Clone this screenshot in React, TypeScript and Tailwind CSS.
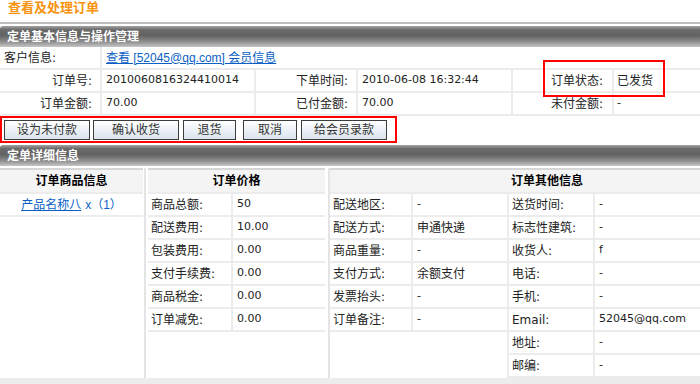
import React from 'react';

const isCjk = (s: string) => /[\u4e00-\u9fff]/.test(s);

// values: latin text in a Verdana-like face, chinese text at 12px
const Val = ({ v }: { v: string }) => (
  <span className={isCjk(v) ? 'text-[12px]' : 'text-[11px]'}>{v}</span>
);

const Bar = ({ title }: { title: string }) => (
  <div className="h-[21px] flex items-center pl-[7px] rounded-tl-[3px] bg-[linear-gradient(to_bottom,#a3a3a3_0%,#6a6a6a_18%,#626262_45%,#8e8e8e_75%,#c6c6c6_100%)] text-white font-bold text-[12px]">
    {title}
  </div>
);

const Head = ({ title }: { title: string }) => (
  <div className="h-[26px] border-t-2 border-b-2 border-t-[#d6d6d6] border-b-[#ececec] bg-[#f4f4f4] flex items-center justify-center font-bold text-[12px] text-black">
    {title}
  </div>
);

const Row = ({ label, value, lw }: { label: string; value: string; lw: string }) => (
  <div className="h-[23px] flex border-b-2 border-[#ececec]">
    <div className={`${lw} shrink-0 h-full flex items-center pl-[3px] border-r-2 border-[#ececec]`}>{label}</div>
    <div className="flex-1 h-full flex items-center pl-[4px]">
      <Val v={value} />
    </div>
  </div>
);

const App = () => {
  const prices = [
    ['商品总额:', '50'],
    ['配送费用:', '10.00'],
    ['包装费用:', '0.00'],
    ['支付手续费:', '0.00'],
    ['商品税金:', '0.00'],
    ['订单减免:', '0.00'],
  ];
  const otherLeft = [
    ['配送地区:', '-'],
    ['配送方式:', '申通快递'],
    ['商品重量:', '-'],
    ['支付方式:', '余额支付'],
    ['发票抬头:', '-'],
    ['订单备注:', '-'],
  ];
  const otherRight = [
    ['送货时间:', '-'],
    ['标志性建筑:', '-'],
    ['收货人:', 'f'],
    ['电话:', '-'],
    ['手机:', '-'],
    ['Email:', '52045@qq.com'],
    ['地址:', '-'],
    ['邮编:', '-'],
  ];

  return <div className="w-[700px] h-[384px] overflow-hidden bg-white">
      <div className="relative w-[764px] text-[12px] text-[#222] font-['DejaVu_Sans','Noto_Sans_CJK_SC',sans-serif]">
        {/* page title */}
        <div className="h-[22px] pl-[8px] leading-[16px] text-[13px] font-bold text-[#f7930f]">查看及处理订单</div>
        <div className="h-[2px] bg-[#bdbdbd]" />
        <div className="h-[2px]" />
        <Bar title="定单基本信息与操作管理" />

        {/* basic info */}
        <div className="h-[23px] flex border-b-2 border-[#ececec]">
          <div className="w-[102px] h-full flex items-center pl-[4px] border-r-2 border-[#ececec]">客户信息:</div>
          <div className="flex-1 h-full flex items-center pl-[4px]">
            <a className="text-[#0b5fc4] underline font-['Liberation_Sans','Noto_Sans_CJK_SC',sans-serif]">查看 [52045@qq.com] 会员信息</a>
          </div>
        </div>
        <div className="h-[23px] flex border-b-2 border-[#ececec]">
          <div className="w-[102px] h-full flex items-center justify-end pr-[8px] border-r-2 border-[#ececec]">订单号:</div>
          <div className="w-[154px] h-full flex items-center pl-[4px] border-r-2 border-[#ececec]"><Val v="2010060816324410014" /></div>
          <div className="w-[102px] h-full flex items-center justify-end pr-[8px] border-r-2 border-[#ececec]">下单时间:</div>
          <div className="w-[155px] h-full flex items-center pl-[4px] border-r-2 border-[#ececec]"><Val v="2010-06-08 16:32:44" /></div>
          <div className="w-[101px] h-full flex items-center justify-end pr-[9px] border-r-2 border-[#ececec]">订单状态:</div>
          <div className="flex-1 h-full flex items-center pl-[3px]"><Val v="已发货" /></div>
        </div>
        <div className="h-[23px] flex border-b-2 border-[#ececec]">
          <div className="w-[102px] h-full flex items-center justify-end pr-[8px] border-r-2 border-[#ececec]">订单金额:</div>
          <div className="w-[154px] h-full flex items-center pl-[4px] border-r-2 border-[#ececec]"><Val v="70.00" /></div>
          <div className="w-[102px] h-full flex items-center justify-end pr-[8px] border-r-2 border-[#ececec]">已付金额:</div>
          <div className="w-[155px] h-full flex items-center pl-[4px] border-r-2 border-[#ececec]"><Val v="70.00" /></div>
          <div className="w-[101px] h-full flex items-center justify-end pr-[9px] border-r-2 border-[#ececec]">未付金额:</div>
          <div className="flex-1 h-full flex items-center pl-[3px]"><Val v="-" /></div>
        </div>

        {/* action buttons */}
        <div className="w-[397px] h-[27px] border-2 border-[#f00] flex items-center pl-[2px]">
          <button className="w-[86px] h-[20px] border border-[#3c3c3c] bg-[linear-gradient(to_bottom,#ffffff,#d9e3ec)] text-[12px] text-[#333]">设为未付款</button>
          <button className="ml-[3px] w-[86px] h-[20px] border border-[#3c3c3c] bg-[linear-gradient(to_bottom,#ffffff,#d9e3ec)] text-[12px] text-[#333]">确认收货</button>
          <button className="ml-[4px] w-[53px] h-[20px] border border-[#3c3c3c] bg-[linear-gradient(to_bottom,#ffffff,#d9e3ec)] text-[12px] text-[#333]">退货</button>
          <button className="ml-[7px] w-[54px] h-[20px] border border-[#3c3c3c] bg-[linear-gradient(to_bottom,#ffffff,#d9e3ec)] text-[12px] text-[#333]">取消</button>
          <button className="ml-[4px] w-[86px] h-[20px] border border-[#3c3c3c] bg-[linear-gradient(to_bottom,#ffffff,#d9e3ec)] text-[12px] text-[#333]">给会员录款</button>
        </div>

        <div className="h-[2px]" />
        <Bar title="定单详细信息" />
        <div className="h-[2px]" />

        {/* detail columns */}
        <div className="h-[210px] flex">
          <div className="w-[146px] border-r-2 border-[#e4e4e4] pr-[1px]">
            <Head title="订单商品信息" />
            <div className="h-[23px] border-b-2 border-[#ececec] flex items-center justify-center text-[#0b5fc4]">
              <a className="underline">产品名称八</a>
              <span className="ml-[4px] font-['Liberation_Sans','Noto_Sans_CJK_SC',sans-serif]">x（1）</span>
            </div>
          </div>
          <div className="w-[184px] pl-[2px] pr-[3px] border-r-2 border-[#e4e4e4]">
            <Head title="订单价格" />
            {prices.map(([l, v]) => <Row key={l} label={l} value={v} lw="w-[85px]" />)}
          </div>
          <div className="flex-1">
            <Head title="订单其他信息" />
            <div className="flex">
              <div className="w-[177px]">
                {otherLeft.map(([l, v]) => <Row key={l} label={l} value={v} lw="w-[83px]" />)}
              </div>
              <div className="flex-1 border-l-2 border-[#ececec]">
                {otherRight.map(([l, v]) => <Row key={l} label={l} value={v} lw="w-[86px]" />)}
              </div>
            </div>
          </div>
        </div>
        <div className="h-[8px] bg-[#ececec]" />

        {/* annotation box around the order status */}
        <div className="absolute left-[543px] top-[60px] w-[122px] h-[37px] border-2 border-[#f00]" />
      </div>
    </div>;
};

export default App;
